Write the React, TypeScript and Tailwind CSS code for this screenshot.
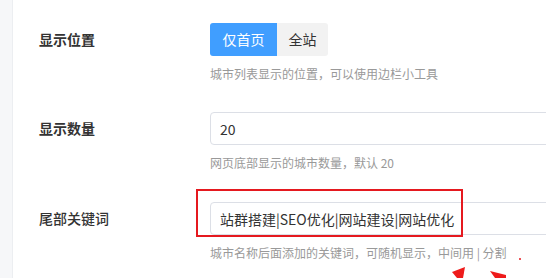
const fieldFont = "font-['Noto_Sans_CJK_SC','Noto_Sans',sans-serif]";

type FieldRowProps = {
  label: string;
  help: string;
  labelWeight?: string;
  gapAfter: string;
  children: React.ReactNode;
};

function FieldRow({ label, help, labelWeight = "font-bold", gapAfter, children }: FieldRowProps) {
  return (
    <div className={`flex ${gapAfter}`}>
      <div className={`flex h-[33px] w-[171px] shrink-0 items-center text-[14px] text-[#333] ${labelWeight}`}>
        {label}
      </div>
      <div className="flex flex-col">
        {children}
        <p className="mt-[9px] text-[12px] leading-[18px] text-[#999]">{help}</p>
      </div>
    </div>
  );
}

export default function App() {
  return (
    <div className={`relative flex h-[278px] w-[546px] overflow-hidden bg-white ${fieldFont}`}>
      <div className="w-[13px] shrink-0 border-r border-[#eceef1] bg-[#f6f7f9]" />

      <div className="flex flex-col pl-[26px] pt-[23px]">
        <FieldRow label="显示位置" help="城市列表显示的位置，可以使用边栏小工具" gapAfter="mb-[29px]">
          <div className="flex h-[33px] w-fit overflow-hidden rounded-[3px] text-[14px]">
            <button type="button" className="w-[67px] bg-[#409eff] text-white">
              仅首页
            </button>
            <button type="button" className="w-[51px] bg-[#f2f2f2] text-[#333]">
              全站
            </button>
          </div>
        </FieldRow>

        <FieldRow label="显示数量" help="网页底部显示的城市数量，默认 20" gapAfter="mb-[30px]">
          <input
            type="text"
            readOnly
            defaultValue="20"
            className="h-[33px] w-[400px] rounded-[4px] border border-[#dcdfe6] px-[9px] text-[14px] text-[#333] outline-none"
          />
        </FieldRow>

        <FieldRow
          label="尾部关键词"
          help="城市名称后面添加的关键词，可随机显示，中间用 | 分割"
          labelWeight="font-medium"
          gapAfter="mb-0"
        >
          <input
            type="text"
            readOnly
            defaultValue="站群搭建|SEO优化|网站建设|网站优化"
            className="h-[33px] w-[400px] rounded-[4px] border border-[#dcdfe6] px-[9px] text-[14px] text-[#333] outline-none"
          />
        </FieldRow>
      </div>

      {/* annotation box drawn over the screenshot */}
      <div className="pointer-events-none absolute left-[196px] top-[189px] h-[48px] w-[267px] border-2 border-[#e5191f]" />

      <svg
        className="pointer-events-none absolute left-0 top-0"
        width="546"
        height="278"
        viewBox="0 0 546 278"
      >
        <polygon points="465,267 452,272 457,278 463,278" fill="#ee1b1b" />
        <polygon points="490,271 506,275 506,278 495,278" fill="#ee1b1b" />
        <circle cx="520" cy="259" r="1" fill="#e5191f" />
      </svg>
    </div>
  );
}
